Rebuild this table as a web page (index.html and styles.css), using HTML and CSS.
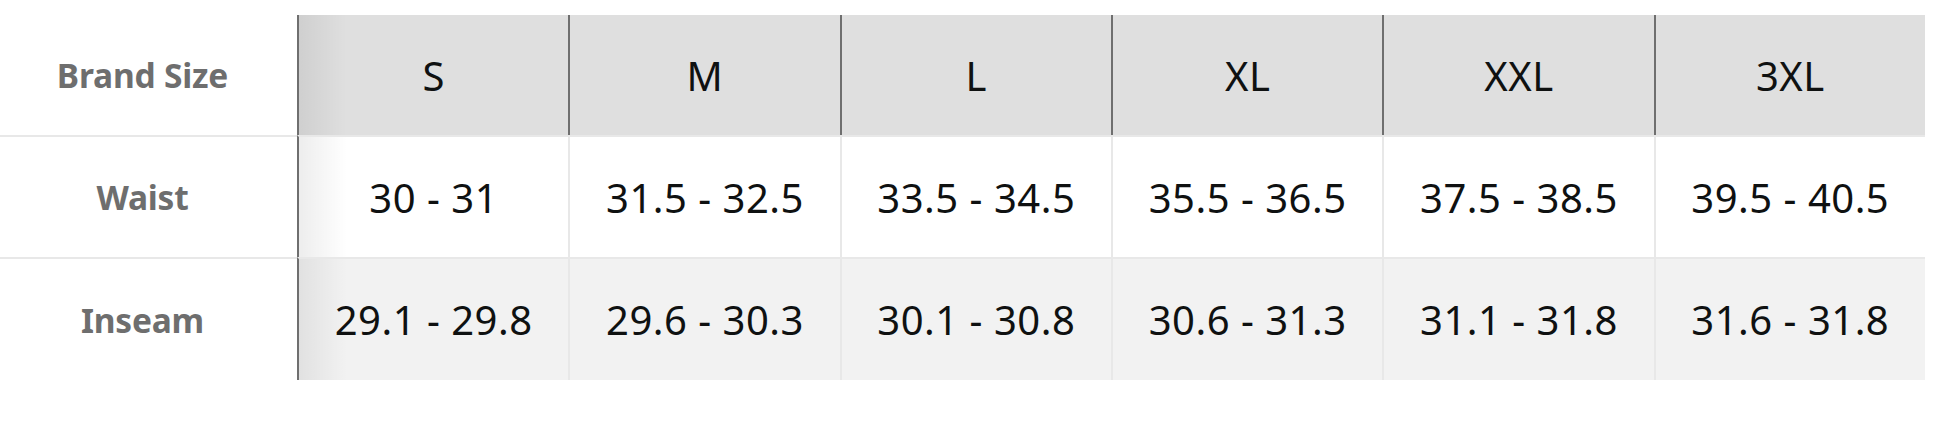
FILE: index.html
```html
<!DOCTYPE html>
<html lang="en">
<head>
<meta charset="utf-8">
<title>Size Chart</title>
<link rel="stylesheet" href="styles.css">
</head>
<body>
<div class="chart">
  <div class="label">Brand Size</div>
  <div class="cell head first">S</div>
  <div class="cell head">M</div>
  <div class="cell head">L</div>
  <div class="cell head">XL</div>
  <div class="cell head">XXL</div>
  <div class="cell head">3XL</div>

  <div class="label sep">Waist</div>
  <div class="cell odd first">30 - 31</div>
  <div class="cell odd">31.5 - 32.5</div>
  <div class="cell odd">33.5 - 34.5</div>
  <div class="cell odd">35.5 - 36.5</div>
  <div class="cell odd">37.5 - 38.5</div>
  <div class="cell odd">39.5 - 40.5</div>

  <div class="label sep">Inseam</div>
  <div class="cell even first">29.1 - 29.8</div>
  <div class="cell even">29.6 - 30.3</div>
  <div class="cell even">30.1 - 30.8</div>
  <div class="cell even">30.6 - 31.3</div>
  <div class="cell even">31.1 - 31.8</div>
  <div class="cell even">31.6 - 31.8</div>
</div>
</body>
</html>
```

FILE: styles.css
```css
* { box-sizing: border-box; }

html, body {
  margin: 0;
  padding: 0;
  background: #ffffff;
}

body {
  font-family: "Noto Sans", "Open Sans", "Liberation Sans", sans-serif;
}

.chart {
  display: grid;
  grid-template-columns: 297px repeat(6, 271.33px);
  grid-template-rows: 120px 122px 123px;
  margin-top: 15px;
}

.label {
  display: flex;
  align-items: center;
  justify-content: center;
  padding-right: 12px;
  font-size: 33.5px;
  font-weight: 700;
  color: #6e6e6e;
  letter-spacing: -0.2px;
}

.label.sep {
  border-top: 2px solid #e8e8e8;
}

.cell {
  display: flex;
  align-items: center;
  justify-content: center;
  font-size: 40px;
  letter-spacing: 0.5px;
  color: #0f1111;
  border-left: 2px solid #e8e8e8;
}

.cell.head {
  background-color: #dfdfdf;
  border-left: 2px solid #6f6f6f;
}

.cell.odd {
  background-color: #ffffff;
  border-top: 2px solid #e8e8e8;
}

.cell.even {
  background-color: #f2f2f2;
  border-top: 2px solid #e8e8e8;
}

.cell.first {
  border-left: 2px solid #6f6f6f;
  background-image: linear-gradient(to right, rgba(0, 0, 0, 0.07), rgba(0, 0, 0, 0) 48px);
}
```
